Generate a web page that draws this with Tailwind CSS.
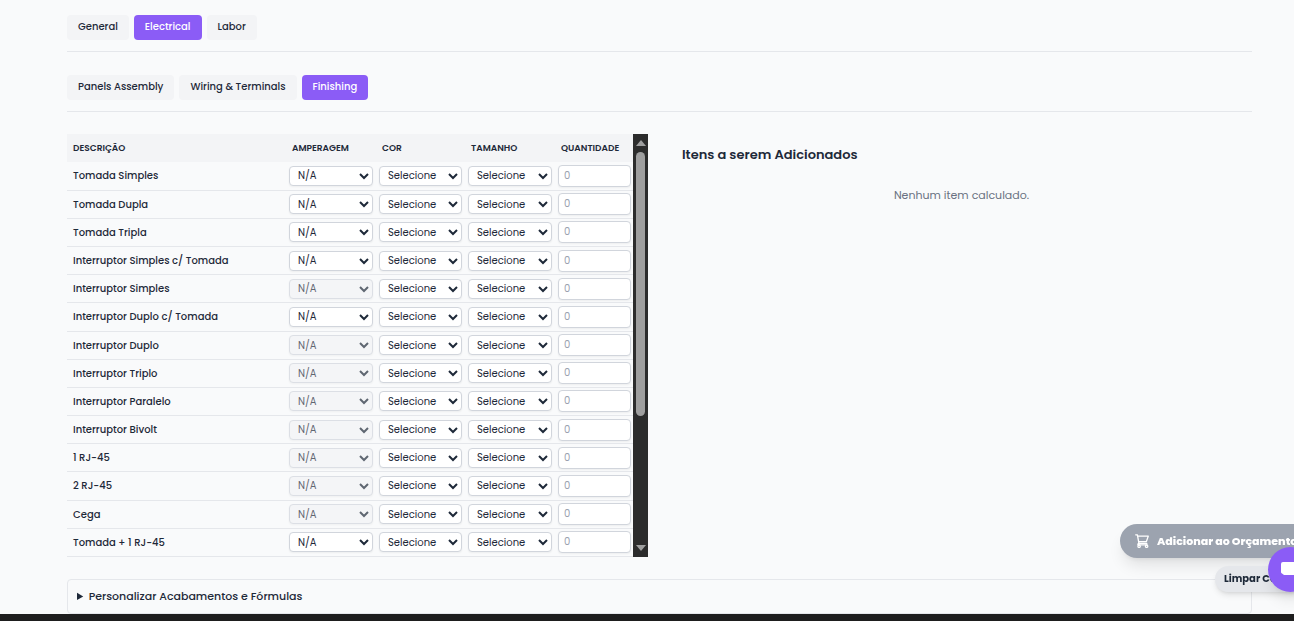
<!DOCTYPE html>
<html lang="pt-BR">
    <head>
        <meta charset="utf-8" />
        <title>Electrical | Finishing</title>
        <meta name="viewport" content="width=device-width, initial-scale=1" />
        <script src="https://cdn.jsdelivr.net/npm/@tailwindcss/browser@4"></script>
    </head>
    <body class="min-h-screen overflow-hidden bg-[#f9fafb] font-['Poppins','Inter',sans-serif] text-[10px] text-gray-800">
        <main class="pl-[67px] pr-[42px] pt-[15px]">
            <nav class="flex gap-[5px] border-b border-gray-200 pb-[11px] font-medium">
                <button type="button" class="h-[25px] rounded bg-gray-100 px-[11px] pb-[2px]">General</button>
                <button type="button" class="h-[25px] rounded bg-[#8b5cf6] px-[11px] pb-[2px] text-white">Electrical</button>
                <button type="button" class="h-[25px] rounded bg-gray-100 px-[11px] pb-[2px]">Labor</button>
            </nav>
            <nav class="mt-[23px] flex gap-[5px] border-b border-gray-200 pb-[11px] font-medium">
                <button type="button" class="h-[25px] rounded bg-gray-100 px-[11px] pb-[2px]">Panels Assembly</button>
                <button type="button" class="h-[25px] rounded bg-gray-100 px-[11px] pb-[2px]">Wiring &amp; Terminals</button>
                <button type="button" class="h-[25px] rounded bg-[#8b5cf6] px-[11px] pb-[2px] text-white">Finishing</button>
            </nav>

            <div class="mt-[22px] grid grid-cols-2 gap-[23px]">
                <div class="flex h-[423px] overflow-hidden">
                    <table class="h-full min-w-0 flex-1 table-fixed border-collapse">
                        <thead class="bg-gray-100 text-left text-[9px]">
                            <tr class="h-7">
                                <th class="px-[6px] pt-[2px] font-semibold">DESCRIÇÃO</th>
                                <th class="w-[90px] px-[6px] pt-[2px] font-semibold">AMPERAGEM</th>
                                <th class="w-[89px] px-[6px] pt-[2px] font-semibold">COR</th>
                                <th class="w-[90px] px-[6px] pt-[2px] font-semibold">TAMANHO</th>
                                <th class="w-[78px] px-[6px] pt-[2px] font-semibold">QUANTIDADE</th>
                            </tr>
                        </thead>
                        <tbody id="items"></tbody>
                    </table>
                    <div class="flex w-[15px] flex-col items-center bg-[#2c2c2c] py-[6px]" aria-hidden="true">
                        <svg class="h-[6px] w-[10px] shrink-0 fill-[#9f9f9f]" viewBox="0 0 10 6"><path d="M5 0l5 6H0z" /></svg>
                        <div class="mt-[6px] h-[264px] w-[9px] rounded-full bg-[#9f9f9f]"></div>
                        <svg class="mt-auto h-[6px] w-[10px] shrink-0 fill-[#9f9f9f]" viewBox="0 0 10 6"><path d="M0 0h10L5 6z" /></svg>
                    </div>
                </div>
                <section class="px-[11px] py-3">
                    <h3 class="text-[13px] leading-[18px] font-semibold">Itens a serem Adicionados</h3>
                    <p class="mt-[22px] text-center text-[11px] leading-[18px] text-gray-500">Nenhum item calculado.</p>
                </section>
            </div>

            <details class="mt-[22px] rounded border border-gray-200 px-[9px] py-2">
                <summary class="text-[11px] leading-[17px] font-medium">Personalizar Acabamentos e Fórmulas</summary>
            </details>
        </main>

        <button type="button" class="fixed -right-6 bottom-[63px] flex h-[34px] w-[198px] items-center gap-2 rounded-full bg-[#9ca3af] pl-[15px] text-[11px] font-extrabold whitespace-nowrap text-white shadow-lg">
            <svg class="size-[14px] shrink-0" viewBox="0 0 14 14" fill="none" stroke="currentColor" stroke-width="1.3" stroke-linecap="round" stroke-linejoin="round">
                <path d="M.7 .8h1.7l1.5 8.5h8M2.7 2.1h10.6l-1.9 5.4-7.8.2" />
                <path d="M3.9 9.3c-1.3.5-1.3 1.6-.4 1.6h8.5" />
                <circle cx="4.1" cy="12.2" r="1.2" />
                <circle cx="11.6" cy="12.2" r="1.2" />
            </svg>
            Adicionar ao Orçamento
        </button>
        <button type="button" class="fixed -right-6 bottom-[29px] h-[26px] w-[103px] rounded-full bg-gray-200 pb-[2px] pl-[9px] text-left font-bold whitespace-nowrap shadow-md">Limpar Campos</button>
        <button type="button" aria-label="Chat" class="fixed -right-[19px] bottom-[29px] flex size-[45px] items-center justify-center rounded-full bg-[#8b5cf6] text-white shadow-lg">
            <svg class="size-[20px]" viewBox="0 0 20 20" fill="currentColor"><path d="M2 2h16a2 2 0 012 2v9a2 2 0 01-2 2H3l-2-1.500a2 2 0 01-1-2V4a2 2 0 012-2z" /></svg>
        </button>
        <footer class="fixed inset-x-0 bottom-0 h-[7px] bg-[#1e1e1e]"></footer>

        <script>
            // [description, has amperage options]
            const items = [
                ['Tomada Simples', true],
                ['Tomada Dupla', true],
                ['Tomada Tripla', true],
                ['Interruptor Simples c/ Tomada', true],
                ['Interruptor Simples', false],
                ['Interruptor Duplo c/ Tomada', true],
                ['Interruptor Duplo', false],
                ['Interruptor Triplo', false],
                ['Interruptor Paralelo', false],
                ['Interruptor Bivolt', false],
                ['1 RJ-45', false],
                ['2 RJ-45', false],
                ['Cega', false],
                ['Tomada + 1 RJ-45', true],
            ];

            const selectClass = 'block h-5 w-full rounded border border-gray-300 bg-white px-1 text-[10px] shadow-xs disabled:bg-gray-100 disabled:opacity-70';

            document.getElementById('items').innerHTML = items.map(([name, hasAmp]) => `
                <tr class="h-7 border-b border-gray-200">
                    <td class="px-[6px] font-medium">${name}</td>
                    <td class="px-[3px]"><select aria-label="Amperagem: ${name}" class="${selectClass}" ${hasAmp ? '' : 'disabled'}><option>N/A</option></select></td>
                    <td class="px-[3px]"><select aria-label="Cor: ${name}" class="${selectClass}"><option>Selecione</option></select></td>
                    <td class="px-[3px]"><select aria-label="Tamanho: ${name}" class="${selectClass}"><option>Selecione</option></select></td>
                    <td class="pr-[2px] pl-[3px]"><input type="number" min="0" placeholder="0" aria-label="Quantidade: ${name}" class="block h-[22px] w-full rounded border border-gray-300 bg-white px-[5px] shadow-xs placeholder:text-gray-400" /></td>
                </tr>`).join('');
        </script>
    </body>
</html>
